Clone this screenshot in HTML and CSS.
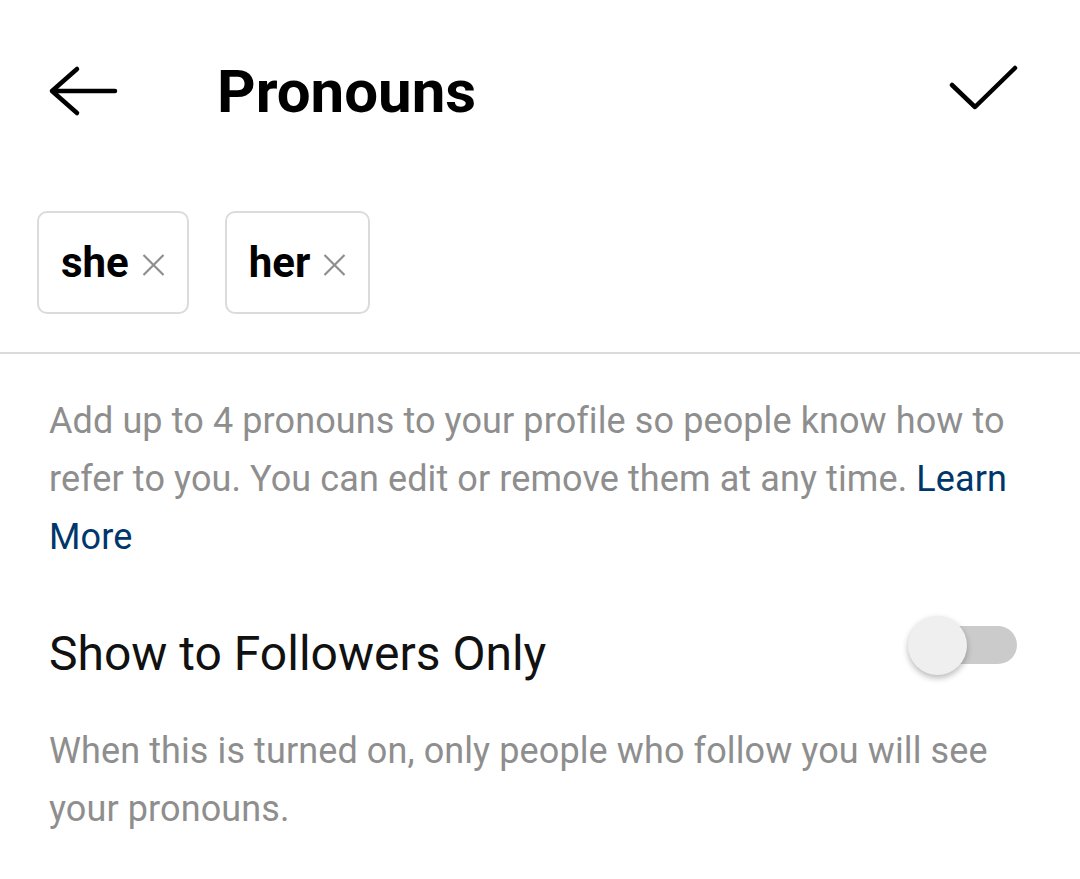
FILE: index.html
```html
<!DOCTYPE html>
<html lang="en">
<head>
<meta charset="UTF-8" />
<title>Pronouns</title>
<link rel="stylesheet" href="styles.css">
</head>
<body>

<header class="topbar">
  <button class="icon-btn back" aria-label="Back">
    <svg width="70" height="52" viewBox="0 0 70 52">
      <path d="M66 26 H3 M28 4 L3 26 L28 48" fill="none" stroke="#000" stroke-width="4.5" stroke-linecap="round" stroke-linejoin="round"/>
    </svg>
  </button>
  <h1 class="title">Pronouns</h1>
  <button class="icon-btn done" aria-label="Done">
    <svg width="70" height="54" viewBox="0 0 70 54">
      <path d="M4 21 L27 43 L67 4" fill="none" stroke="#000" stroke-width="4.5" stroke-linecap="round" stroke-linejoin="round"/>
    </svg>
  </button>
</header>

<div class="chips">
  <div class="chip">she
    <svg class="chip-x" width="23" height="22" viewBox="0 0 23 22"><path d="M1.5 1 L21.5 21 M21.5 1 L1.5 21" stroke="#8e8e8e" stroke-width="2.2" fill="none"/></svg>
  </div>
  <div class="chip">her
    <svg class="chip-x" width="23" height="22" viewBox="0 0 23 22"><path d="M1.5 1 L21.5 21 M21.5 1 L1.5 21" stroke="#8e8e8e" stroke-width="2.2" fill="none"/></svg>
  </div>
</div>

<div class="divider"></div>

<p class="note">Add up to 4 pronouns to your profile so people know how to refer to you. You can edit or remove them at any time. <a href="#" class="link">Learn More</a></p>

<div class="setting">
  <span class="setting-label">Show to Followers Only</span>
  <div class="toggle"><div class="toggle-thumb"></div></div>
</div>

<p class="note">When this is turned on, only people who follow you will see your pronouns.</p>

</body>
</html>
```

FILE: styles.css
```css
body {
  margin: 0;
  background: #fff;
  color: #000;
  font-family: Roboto, 'Liberation Sans', sans-serif;
}

.topbar {
  display: flex;
  align-items: center;
  height: 186px;
  padding: 0 62px 4px 49px;
  box-sizing: border-box;
}

.icon-btn {
  background: none;
  border: none;
  padding: 0;
  display: flex;
  cursor: pointer;
}

.icon-btn svg {
  overflow: visible;
}

.title {
  margin: 0 0 0 98px;
  flex: 1;
  font-size: 60px;
  font-weight: 700;
}

.chips {
  display: flex;
  gap: 36px;
  padding: 25px 37px 38px;
}

.chip {
  display: flex;
  align-items: center;
  height: 99px;
  padding: 0 22px;
  border: 2px solid #dbdbdb;
  border-radius: 10px;
  font-size: 42px;
  font-weight: 700;
}

.chip-x {
  margin-left: 13px;
  margin-top: 4px;
}

.divider {
  height: 2px;
  background: #dbdbdb;
}

.note {
  margin: 0;
  padding: 38px 49px 0;
  font-size: 36px;
  line-height: 58px;
  letter-spacing: 0.1px;
  color: #8e8e8e;
}

.link {
  color: #00376b;
  text-decoration: none;
}

.setting {
  display: flex;
  align-items: flex-start;
  justify-content: space-between;
  padding: 59px 63px 2px 49px;
}

.setting-label {
  font-size: 48px;
  color: #111;
}

.toggle {
  position: relative;
  width: 88px;
  height: 38px;
  margin-top: 1px;
  border-radius: 19px;
  background: #cbcbcb;
}

.toggle-thumb {
  position: absolute;
  left: -21px;
  top: -10px;
  width: 59px;
  height: 59px;
  border-radius: 50%;
  background: #efefef;
  box-shadow: 0 3px 6px rgba(0, 0, 0, 0.28);
}
```
